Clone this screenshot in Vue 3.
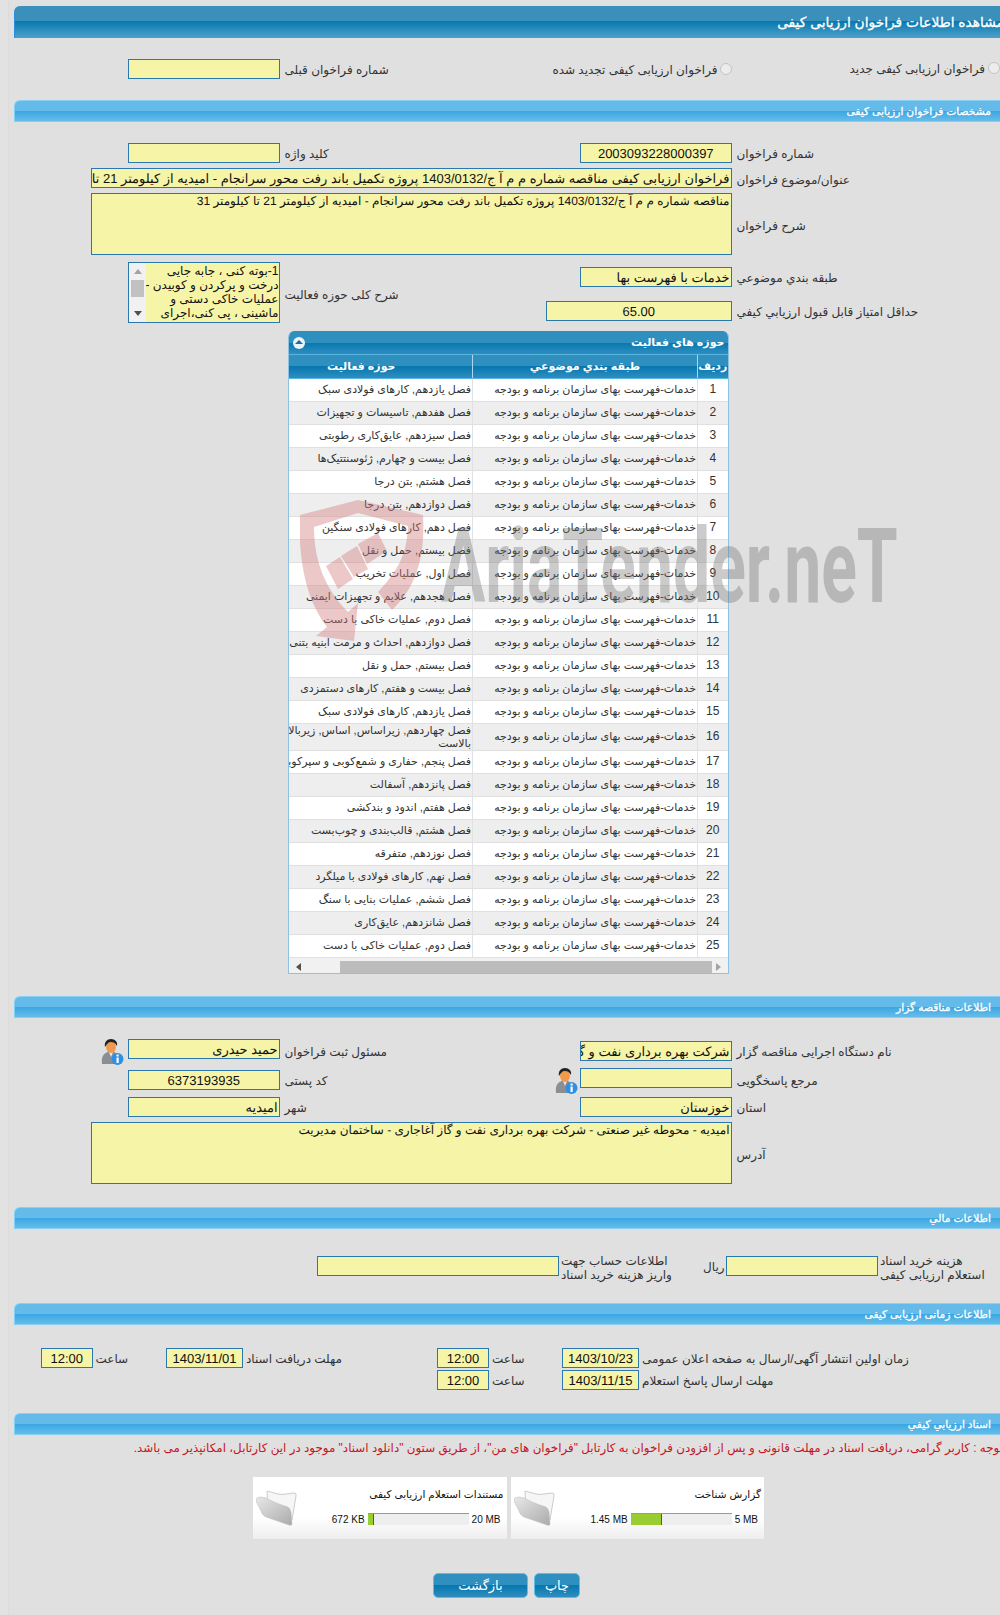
<script setup>
const base = 'خدمات-فهرست بهای سازمان برنامه و بودجه'
const rows = [
  ['1', 'فصل یازدهم, کارهای فولادی سبک'],
  ['2', 'فصل هفدهم, تاسیسات و تجهیزات'],
  ['3', 'فصل سیزدهم, عایق‌کاری رطوبتی'],
  ['4', 'فصل بیست و چهارم, ژئوسنتتیک‌ها'],
  ['5', 'فصل هشتم, بتن درجا'],
  ['6', 'فصل دوازدهم, بتن درجا'],
  ['7', 'فصل دهم, کارهای فولادی سنگین'],
  ['8', 'فصل بیستم, حمل و نقل'],
  ['9', 'فصل اول, عملیات تخریب'],
  ['10', 'فصل هجدهم, علایم و تجهیزات ایمنی'],
  ['11', 'فصل دوم, عملیات خاکی با دست'],
  ['12', 'فصل دوازدهم, احداث و مرمت ابنیه بتنی'],
  ['13', 'فصل بیستم, حمل و نقل'],
  ['14', 'فصل بیست و هفتم, کارهای دستمزدی'],
  ['15', 'فصل یازدهم, کارهای فولادی سبک'],
  ['16', 'فصل چهاردهم, زیراساس, اساس, زیربالا\nبالاست'],
  ['17', 'فصل پنجم, حفاری و شمع‌کوبی و سپرکوبی'],
  ['18', 'فصل پانزدهم, آسفالت'],
  ['19', 'فصل هفتم, اندود و بندکشی'],
  ['20', 'فصل هشتم, قالب‌بندی و چوب‌بست'],
  ['21', 'فصل نوزدهم, متفرقه'],
  ['22', 'فصل نهم, کارهای فولادی با میلگرد'],
  ['23', 'فصل ششم, عملیات بنایی با سنگ'],
  ['24', 'فصل شانزدهم, عایق‌کاری'],
  ['25', 'فصل دوم, عملیات خاکی با دست']
]
const cards = [
  { title: 'مستندات استعلام ارزیابی کیفی', used: '672 KB', max: '20 MB', fill: 5 },
  { title: 'گزارش شناخت', used: '1.45 MB', max: '5 MB', fill: 30 }
]
const activityText = '1-بوته کنی ، جابه جایی\nدرخت و پرکردن و کوبیدن -\nعملیات خاکی دستی و\nماشینی ، پی کنی،اجرای'
</script>

<template>
  <div class="page">
    <div class="mainbar">مشاهده اطلاعات فراخوان ارزیابی کیفی</div>

    <div class="block first">
      <div class="row">
        <i></i>
        <div class="fld"></div>
        <div class="lbl">شماره فراخوان قبلی</div>
        <div class="radios">
          <span class="radio-item"><span class="radio"></span><span class="lbl-r">فراخوان ارزیابی کیفی تجدید شده</span></span>
        </div>
        <div class="radio-last"><span class="lbl-r">فراخوان ارزیابی کیفی جدید</span><span class="radio"></span></div>
      </div>
    </div>

    <div class="secbar">مشخصات فراخوان ارزیابی کیفی</div>
    <div class="block spec">
      <div class="row">
        <i></i>
        <div class="fld"></div>
        <div class="lbl">کلید واژه</div>
        <div class="fld c">2003093228000397</div>
        <div class="lbl">شماره فراخوان</div>
      </div>
      <div class="wide">
        <i></i>
        <div class="fld">فراخوان ارزیابی کیفی مناقصه شماره م م آ ج/1403/0132 پروژه تکمیل باند رفت محور سرانجام - امیدیه از کیلومتر 21 تا کیلومتر 31</div>
        <div class="lbl">عنوان/موضوع فراخوان</div>
      </div>
      <div class="wide">
        <i></i>
        <div class="fld area">مناقصه شماره م م آ ج/1403/0132 پروژه تکمیل باند رفت محور سرانجام - امیدیه از کیلومتر 21 تا کیلومتر 31</div>
        <div class="lbl">شرح فراخوان</div>
      </div>
      <div class="row activity">
        <i></i>
        <div class="listbox">
          <div class="vscroll">
            <span class="arr up"></span>
            <span class="thumb"></span>
            <span class="arr down"></span>
          </div>
          <div class="listtext">{{ activityText }}</div>
        </div>
        <div class="lbl">شرح کلی حوزه فعالیت</div>
        <div class="stack">
          <div class="fld cat">خدمات با فهرست بها</div>
          <div class="fld c score">65.00</div>
        </div>
        <div class="stack labels">
          <div class="lbl">طبقه بندي موضوعي</div>
          <div class="lbl">حداقل امتياز قابل قبول ارزيابي کيفي</div>
        </div>
      </div>
    </div>

    <div class="panel">
      <div class="panelhead">
        <span>حوزه های فعالیت</span>
        <span class="toggle"><b></b></span>
      </div>
      <table class="grid">
        <colgroup>
          <col class="c1">
          <col class="c2">
          <col class="c3">
        </colgroup>
        <thead>
          <tr>
            <th>رديف</th>
            <th>طبقه بندي موضوعي</th>
            <th class="off">حوزه فعالیت</th>
          </tr>
        </thead>
        <tbody>
          <tr v-for="r in rows" :key="r[0]" :class="{ tall: r[0] === '16' }">
            <td class="num">{{ r[0] }}</td>
            <td>{{ base }}</td>
            <td>{{ r[1] }}</td>
          </tr>
        </tbody>
      </table>
      <div class="hscroll">
        <span class="harr left"></span>
        <span class="hthumb"></span>
        <span class="harr right"></span>
      </div>
    </div>

    <div class="secbar gap22">اطلاعات مناقصه گزار</div>
    <div class="block org">
      <div class="row r1">
        <div class="iconcell">
          <svg class="person" viewBox="0 0 24 26" width="24" height="26">
            <path d="M2 25c-1-8 2-11 6-12h6c3 1 5 4 5 12z" fill="#8a8f94" />
            <path d="M9 13l2 5 2-5z" fill="#e8e8e8" />
            <ellipse cx="11" cy="8" rx="5" ry="6" fill="#f09a4e" />
            <path d="M5 8c-1-5 2-8 6-8s7 3 6 7c-2-3-3-4-6-4S7 5 5 8z" fill="#222" />
            <circle cx="17.500" cy="20" r="6" fill="#2f8fe0" />
            <rect x="16.500" y="18.500" width="2.200" height="5.500" fill="#fff" />
            <rect x="16.500" y="15.500" width="2.200" height="2" fill="#fff" />
          </svg>
        </div>
        <div class="fld">حمید حیدری</div>
        <div class="lbl low">مسئول ثبت فراخوان</div>
        <div class="fld low">شرکت بهره برداری نفت و گاز آغاجاری</div>
        <div class="lbl low">نام دستگاه اجرایی مناقصه گزار</div>
      </div>
      <div class="row r2">
        <i></i>
        <div class="fld c low">6373193935</div>
        <div class="lbl-wrap low">
          <div class="lbl">کد پستی</div>
          <svg class="person" viewBox="0 0 24 26" width="24" height="26">
            <path d="M2 25c-1-8 2-11 6-12h6c3 1 5 4 5 12z" fill="#8a8f94" />
            <path d="M9 13l2 5 2-5z" fill="#e8e8e8" />
            <ellipse cx="11" cy="8" rx="5" ry="6" fill="#f09a4e" />
            <path d="M5 8c-1-5 2-8 6-8s7 3 6 7c-2-3-3-4-6-4S7 5 5 8z" fill="#222" />
            <circle cx="17.500" cy="20" r="6" fill="#2f8fe0" />
            <rect x="16.500" y="18.500" width="2.200" height="5.500" fill="#fff" />
            <rect x="16.500" y="15.500" width="2.200" height="2" fill="#fff" />
          </svg>
        </div>
        <div class="fld"></div>
        <div class="lbl low">مرجع پاسخگویی</div>
      </div>
      <div class="row r3">
        <i></i>
        <div class="fld">امیدیه</div>
        <div class="lbl">شهر</div>
        <div class="fld">خوزستان</div>
        <div class="lbl">استان</div>
      </div>
      <div class="wide">
        <i></i>
        <div class="fld area">امیدیه - محوطه غیر صنعتی - شرکت بهره برداری نفت و گاز آغاجاری - ساختمان مدیریت</div>
        <div class="lbl">آدرس</div>
      </div>
    </div>

    <div class="secbar gap23">اطلاعات مالي</div>
    <div class="block money">
      <i></i>
      <div class="fld"></div>
      <div class="lbl two">اطلاعات حساب جهت<br>واریز هزینه خرید اسناد</div>
      <div class="lbl riyal">ریال</div>
      <div class="fld"></div>
      <div class="lbl two">هزینه خرید اسناد<br>استعلام ارزیابی کیفی</div>
    </div>

    <div class="secbar gap23">اطلاعات زمانی ارزیابی کیفی</div>
    <div class="block times">
      <div class="trow">
        <i></i>
        <div class="fld c">12:00</div>
        <div class="lbl">ساعت</div>
        <div class="fld c">1403/11/01</div>
        <div class="lbl">مهلت دریافت اسناد</div>
        <div class="fld c">12:00</div>
        <div class="lbl">ساعت</div>
        <div class="fld c">1403/10/23</div>
        <div class="lbl">زمان اولین انتشار آگهی/ارسال به صفحه اعلان عمومی</div>
      </div>
      <div class="trow second">
        <i></i>
        <i></i>
        <i></i>
        <i></i>
        <i></i>
        <div class="fld c">12:00</div>
        <div class="lbl">ساعت</div>
        <div class="fld c">1403/11/15</div>
        <div class="lbl">مهلت ارسال پاسخ استعلام</div>
      </div>
    </div>

    <div class="secbar gap21">اسناد ارزيابي کيفي</div>
    <div class="notice">توجه : کاربر گرامی، دریافت اسناد در مهلت قانونی و پس از افزودن فراخوان به کارتابل "فراخوان های من"، از طریق ستون "دانلود اسناد" موجود در این کارتابل، امکانپذیر می باشد.</div>

    <div class="cards">
      <div v-for="c in cards" :key="c.title" class="card">
        <svg class="folder" viewBox="0 0 42 36" width="42" height="36">
          <defs>
            <linearGradient id="fg" x1="0" y1="0" x2="1" y2="1">
              <stop offset="0" stop-color="#e8e8e8" />
              <stop offset="1" stop-color="#aaa" />
            </linearGradient>
          </defs>
          <path d="M11 1L22 4Q26 5 30 4L38 3Q41 3 40 6L36 30L12 22Z" fill="#f6f6f6" stroke="#ccc" />
          <path d="M1 8Q4 6 10 8L18 12Q25 15 32 17Q34 18 35 22L36 34Q36 36 33 35L10 27Q6 25 5 21L0 11Q0 9 1 8Z" fill="url(#fg)" stroke="#bbb" stroke-width=".5" />
        </svg>
        <div class="cardbody">
          <div class="cardtitle">{{ c.title }}</div>
          <div class="usage">
            <span>{{ c.used }}</span>
            <span class="bar"><span class="barfill" :style="{ width: c.fill + 'px' }"></span></span>
            <span>{{ c.max }}</span>
          </div>
        </div>
      </div>
    </div>

    <div class="buttons">
      <button type="button" class="btn back">بازگشت</button>
      <button type="button" class="btn print">چاپ</button>
    </div>

    <div class="watermark">
      <svg class="shield" viewBox="0 0 126 145" width="126" height="145">
        <path fill-rule="evenodd" d="M0 15L58 0L123 15C125 55 118 85 92 110L78 92C97 72 107 55 108 26L58 13L14 27C14 62 26 90 48 112L58 103L54 141L16 136L27 127C6 100-2 60 0 15Z" fill="#d27c7c" opacity=".42" />
        <path d="M26 66L40 57L53 79L38 89ZM41 56L57 46L68 69L54 77ZM58 44L78 33L87 51L67 64Z" fill="#d27c7c" opacity=".42" />
      </svg>
      <span class="wmtext">AriaTender.neT</span>
    </div>
  </div>
</template>

<style scoped>
.page {
  position: relative;
  width: 1000px;
  height: 1615px;
  box-sizing: border-box;
  padding: 6px 0 0 14px;
  overflow: hidden;
  background: linear-gradient(90deg, #e2e2e2 8px, #dcdcdc 8px, #dcdcdc 9px, #e0e0e0 9px);
  font-family: "Liberation Sans", "DejaVu Sans", sans-serif;
  font-size: 12px;
  color: #222;
}
.mainbar {
  height: 32px;
  line-height: 33px;
  box-sizing: border-box;
  margin-right: -4px;
  direction: rtl;
  white-space: nowrap;
  color: #fff;
  font-size: 13.800px;
  -webkit-text-stroke: 0.3px #fff;
  border-radius: 6px 0 0 0;
  border-left: 1px solid #2b8fe0;
  background: linear-gradient(#3a90bb 0, #3a90bb 50%, #0878b0 50%, #4a9fc8 100%);
  border-bottom: 1px solid #3d9fe0;
}
.secbar {
  height: 22px;
  line-height: 21px;
  box-sizing: border-box;
  direction: rtl;
  padding-right: 9px;
  color: #fff;
  font-size: 10.700px;
  -webkit-text-stroke: 0.3px #fff;
  white-space: nowrap;
  border-radius: 6px 0 0 0;
  background: linear-gradient(#64bbea 0, #64bbea 50%, #3aa6e2 50%, #66bdea 100%);
  border-top: 1px solid #8bd0f2;
  border-left: 1px solid #7fd0f5;
  border-bottom: 1px solid #86cdf0;
}
.gap21 { margin-top: 21px; }
.gap22 { margin-top: 22px; }
.gap23 { margin-top: 23px; }

.fld {
  height: 20px;
  line-height: 19px;
  box-sizing: border-box;
  border: 1px solid #2a78ad;
  background: #f6f4a6;
  direction: rtl;
  text-align: right;
  font-size: 13px;
  color: #111;
  white-space: nowrap;
  overflow: hidden;
  padding: 0 1px;
  text-rendering: geometricPrecision;
}
.fld.c { text-align: center; }
.fld.area {
  height: 62px;
  white-space: normal;
  font-size: 12px;
  line-height: 14px;
}
.lbl {
  direction: rtl;
  text-align: left;
  padding-left: 5px;
  white-space: nowrap;
  color: #333;
  height: 20px;
  line-height: 23px;
}
.row {
  display: grid;
  grid-template-columns: 114px 151.500px 300.500px 151.500px 1fr;
  align-items: start;
}
.wide {
  display: grid;
  grid-template-columns: 77px 640.500px 1fr;
  align-items: center;
  margin-top: 5px;
}
.wide .lbl { line-height: 24px; }
.first { padding-top: 21px; height: 41px; }
.radios { direction: ltr; margin-left: -29px; }
.radio-item {
  display: flex;
  direction: rtl;
  align-items: center;
  justify-content: flex-start;
  gap: 2px;
}
.radio-last {
  display: flex;
  justify-content: flex-end;
  align-items: center;
  gap: 3px;
  height: 20px;
  direction: ltr;
}
.lbl-r { direction: rtl; color: #333; white-space: nowrap; line-height: 22px; }
.radio {
  display: inline-block;
  flex: none;
  width: 12px;
  height: 12px;
  margin-top: -3px;
  border-radius: 50%;
  border: 1px solid #c4c4c4;
  background: #ececec;
  box-sizing: border-box;
}
.spec { padding-top: 21px; }
.activity { margin-top: 7px; height: 61px; }
.activity > .lbl { align-self: center; line-height: 24px; }
.listbox {
  display: flex;
  height: 61px;
  box-sizing: border-box;
  border: 1px solid #2a78ad;
  background: #f6f4a6;
  overflow: hidden;
}
.vscroll {
  position: relative;
  flex: none;
  width: 17px;
  background: #f1f1f1;
}
.arr {
  position: absolute;
  left: 5px;
  width: 0;
  height: 0;
  border-left: 4px solid transparent;
  border-right: 4px solid transparent;
}
.arr.up { top: 6px; border-bottom: 5px solid #a3a3a3; }
.arr.down { bottom: 6px; border-top: 5px solid #505050; }
.thumb {
  position: absolute;
  left: 2px;
  top: 17px;
  width: 13px;
  height: 17px;
  background: #c1c1c1;
}
.listtext {
  flex: 1;
  direction: rtl;
  text-align: right;
  font-size: 12px;
  line-height: 14px;
  padding-top: 1px;
  color: #111;
  white-space: pre;
  overflow: hidden;
}
.stack { display: flex; flex-direction: column; }
.cat { margin-top: 5px; }
.score { margin-top: 14px; margin-left: -34px; width: 185.500px; }
.labels .lbl { margin-top: 5px; }
.labels .lbl + .lbl { margin-top: 14px; }

.panel {
  width: 441px;
  margin: 8px 0 0 273.500px;
  box-sizing: border-box;
  border: 1px solid #8fc2e2;
  border-top: 0;
  border-radius: 6px 6px 0 0;
  overflow: hidden;
  background: #fff;
  height: 643px;
}
.panelhead {
  display: flex;
  direction: rtl;
  justify-content: space-between;
  align-items: center;
  height: 24px;
  padding: 0 3px 0 4px;
  color: #fff;
  font-weight: bold;
  font-size: 11px;
  background: linear-gradient(#2f8fbf 0, #2f8fbf 50%, #0677b0 50%, #2f8ec0 100%);
  border-bottom: 1px solid #5ab4e0;
  box-sizing: border-box;
}
.toggle {
  position: relative;
  width: 12px;
  height: 12px;
  border-radius: 50%;
  background: #e9f3f9;
}
.toggle b {
  position: absolute;
  left: 2px;
  top: 3px;
  width: 0;
  height: 0;
  border-left: 4px solid transparent;
  border-right: 4px solid transparent;
  border-bottom: 4px solid #1a6f9e;
}
.grid {
  width: 439px;
  table-layout: fixed;
  border-collapse: collapse;
  direction: rtl;
  font-size: 11px;
}
.c1 { width: 30px; }
.c2 { width: 225px; }
.c3 { width: 184px; }
.grid th {
  height: 23px;
  box-sizing: border-box;
  padding: 0;
  color: #fff;
  font-weight: bold;
  font-size: 11px;
  border-left: 1px solid #a9d8f0;
  background: linear-gradient(#2f8fbf 0, #2f8fbf 50%, #0677b0 50%, #2f8ec0 100%);
  border-bottom: 1px solid #5ab4e0;
}
.grid th:last-child { border-left: 0; }
.grid th.off { padding-right: 38px; }
.grid td {
  height: 23px;
  box-sizing: border-box;
  padding: 0 1px;
  line-height: 13px;
  color: #333;
  text-align: right;
  overflow: hidden;
  white-space: pre;
  border-left: 1px solid #e2e2e2;
  border-bottom: 1px solid #e0e0e0;
}
.grid td:last-child { border-left: 0; }
.grid td.num { text-align: center; font-size: 12px; }
.grid tbody tr:nth-child(even) { background: #eee; }
.grid tr.tall td { height: 27px; }
.hscroll {
  position: relative;
  height: 18px;
  background: #f1f1f1;
}
.hthumb {
  position: absolute;
  left: 51px;
  right: 16px;
  top: 3px;
  height: 13px;
  background: #bcbcbc;
}
.harr {
  position: absolute;
  top: 5px;
  width: 0;
  height: 0;
  border-top: 4px solid transparent;
  border-bottom: 4px solid transparent;
}
.harr.left { left: 7px; border-right: 5px solid #505050; }
.harr.right { right: 7px; border-left: 5px solid #a3a3a3; }

.org { padding-top: 21px; }
.iconcell { display: flex; justify-content: flex-end; padding-right: 4px; }
.person { display: block; flex: none; }
.r1 { height: 29px; }
.low { margin-top: 2px; }
.r2 { height: 29px; }
.lbl-wrap { display: flex; justify-content: space-between; padding-right: 2px; }
.lbl-wrap .person { margin-top: -2px; }
.r3 { height: 25px; }
.org .wide { margin-top: 0; }

.money {
  display: grid;
  grid-template-columns: 303px 242px 142px 25px 152px 1fr;
  align-items: center;
  padding-top: 23px;
}
.two { height: auto; line-height: 14px; padding: 2px 0 0 2px; margin-bottom: -2px; }
.riyal { padding-left: 2px; }

.times { padding-top: 23px; }
.trow {
  display: grid;
  grid-template-columns: 27px 51.500px 73.500px 77px 194px 52px 73px 77px 1fr;
  height: 22px;
}
.trow .lbl { padding-left: 3px; }
.notice {
  direction: rtl;
  white-space: nowrap;
  color: #c8141e;
  font-size: 11.900px;
  line-height: 14px;
  margin: 6px -3px 1px 0;
  text-align: right;
}
.cards {
  display: flex;
  gap: 4px;
  margin: 22px 0 0 239px;
}
.card {
  display: flex;
  width: 253.500px;
  height: 63px;
  box-sizing: border-box;
  padding: 10px 3px 0 3px;
  background: linear-gradient(#fff 0, #fff 65%, #eee 100%);
  border-bottom: 1px solid #ddd;
}
.folder { flex: none; margin-top: 3px; }
.cardbody { flex: 1; display: flex; flex-direction: column; }
.cardtitle {
  direction: rtl;
  text-align: right;
  color: #111;
  font-size: 10.500px;
  line-height: 14px;
  height: 26px;
}
.usage {
  display: flex;
  justify-content: flex-end;
  align-items: center;
  gap: 3px;
  font-size: 10px;
  color: #111;
  padding-right: 3px;
}
.bar {
  width: 101px;
  height: 12px;
  box-sizing: border-box;
  border-top: 1px solid #999;
  background: #eee;
  display: block;
}
.barfill {
  display: block;
  height: 11px;
  background: #9acd32;
  border-right: 1px solid #555;
  box-sizing: content-box;
}
.buttons {
  display: flex;
  gap: 6px;
  margin: 33px 0 0 419px;
}
.btn {
  height: 25px;
  padding: 0;
  border: 1px solid #5fbbe8;
  border-radius: 5px;
  color: #fff;
  font-family: inherit;
  font-size: 13px;
  background: linear-gradient(#2f8fbf 0, #2f8fbf 50%, #0677b0 50%, #2f8ec0 100%);
}
.back { width: 95px; }
.print { width: 46px; }

.watermark {
  position: absolute;
  left: 300px;
  top: 500px;
  display: flex;
  align-items: flex-start;
  pointer-events: none;
}
.wmtext {
  display: block;
  margin: 11px 0 0 15px;
  font-family: "Roboto", "Liberation Sans", sans-serif;
  font-weight: 700;
  font-size: 104px;
  line-height: 112px;
  color: rgba(110, 110, 110, 0.36);
  white-space: nowrap;
  transform: scaleX(0.635);
  transform-origin: left top;
}
</style>

<style>
html, body { margin: 0; background: #e0e0e0; }
</style>
